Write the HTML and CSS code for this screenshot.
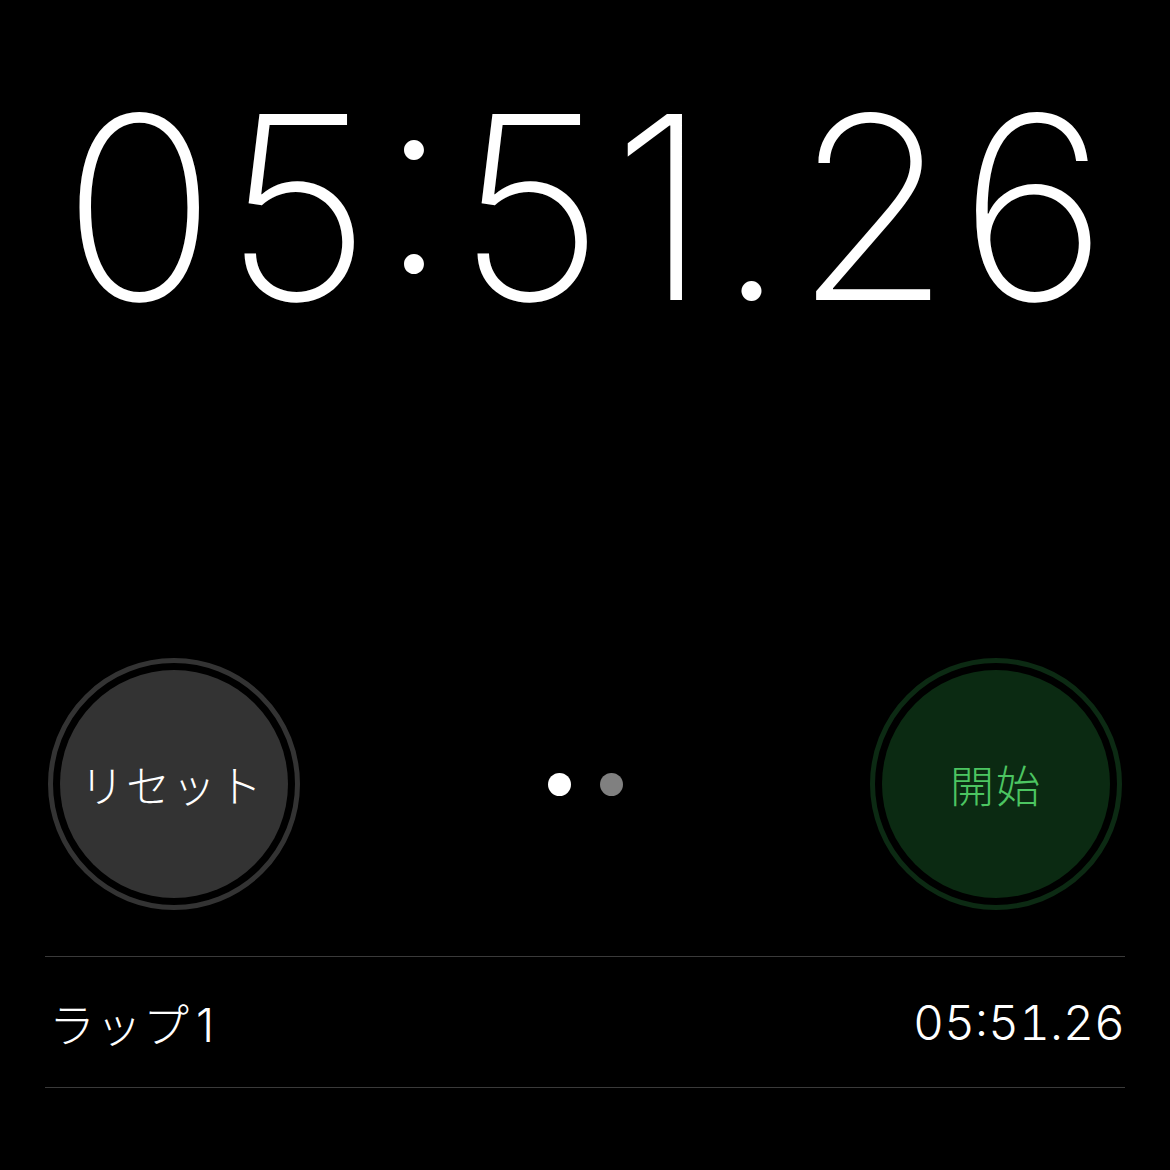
FILE: index.html
```html
<!DOCTYPE html>
<html lang="ja">
<head>
<meta charset="utf-8">
<link rel="stylesheet" href="styles.css">
</head>
<body>
<div class="screen">
  <div class="display">05:51.26</div>
  <div class="controls">
    <div class="btn btn-reset"><div class="btn-inner">リセット</div></div>
    <div class="dots"><span class="dot active"></span><span class="dot"></span></div>
    <div class="btn btn-start"><div class="btn-inner">開始</div></div>
  </div>
  <div class="laps">
    <div class="lap"><span class="lap-name">ラップ<span class="lap-num">1</span></span><span class="lap-time">05:51.26</span></div>
  </div>
</div>
</body>
</html>
```
FILE: styles.css
```css
html, body {
  margin: 0;
  padding: 0;
  background: #000;
}
.screen {
  width: 1170px;
  height: 1170px;
  background: #000;
  color: #fff;
  font-family: Inter, "Noto Sans CJK JP", sans-serif;
  display: flex;
  flex-direction: column;
}
.display {
  margin-top: 58px;
  height: 300px;
  font-size: 255px;
  font-weight: 200;
  line-height: 300px;
  text-align: center;
  font-feature-settings: "case" 1;
  letter-spacing: 7.5px;
  padding-left: 7.5px;
}
.controls {
  margin-top: 300px;
  padding: 0 48px;
  display: flex;
  align-items: center;
  justify-content: space-between;
}
.btn {
  width: 252px;
  height: 252px;
  border-radius: 50%;
  box-sizing: border-box;
  display: flex;
}
.btn-inner {
  flex: 1;
  border-radius: 50%;
  display: flex;
  align-items: center;
  justify-content: center;
  font-family: "Noto Sans CJK JP", sans-serif;
  font-weight: 300;
  font-size: 44px;
  letter-spacing: 2px;
}
.btn-reset {
  border: 5px solid #333;
  padding: 7px;
}
.btn-reset .btn-inner {
  background: #333;
  color: #fff;
  padding-right: 4px;
}
.btn-start {
  border: 5px solid #0c2a13;
  padding: 7px;
}
.btn-start .btn-inner {
  background: #0b2a12;
  color: #4cc561;
}
.dots {
  display: flex;
  gap: 29px;
}
.dot {
  width: 23px;
  height: 23px;
  border-radius: 50%;
  background: #808080;
}
.dot.active {
  background: #fff;
}
.laps {
  margin: 46px 45px 0;
  border-top: 1px solid #3a3a3a;
}
.lap {
  height: 130px;
  border-bottom: 1px solid #3a3a3a;
  display: flex;
  align-items: center;
  justify-content: space-between;
  font-size: 46px;
}
.lap-name {
  font-family: "Noto Sans CJK JP", sans-serif;
  font-weight: 300;
  padding-left: 4px;
  letter-spacing: 1px;
}
.lap-num {
  font-family: Inter, sans-serif;
  margin-left: 6px;
}
.lap-time {
  font-family: Inter, sans-serif;
  font-weight: 300;
  font-size: 48px;
  font-feature-settings: "case" 1, "tnum" 1;
}
```
